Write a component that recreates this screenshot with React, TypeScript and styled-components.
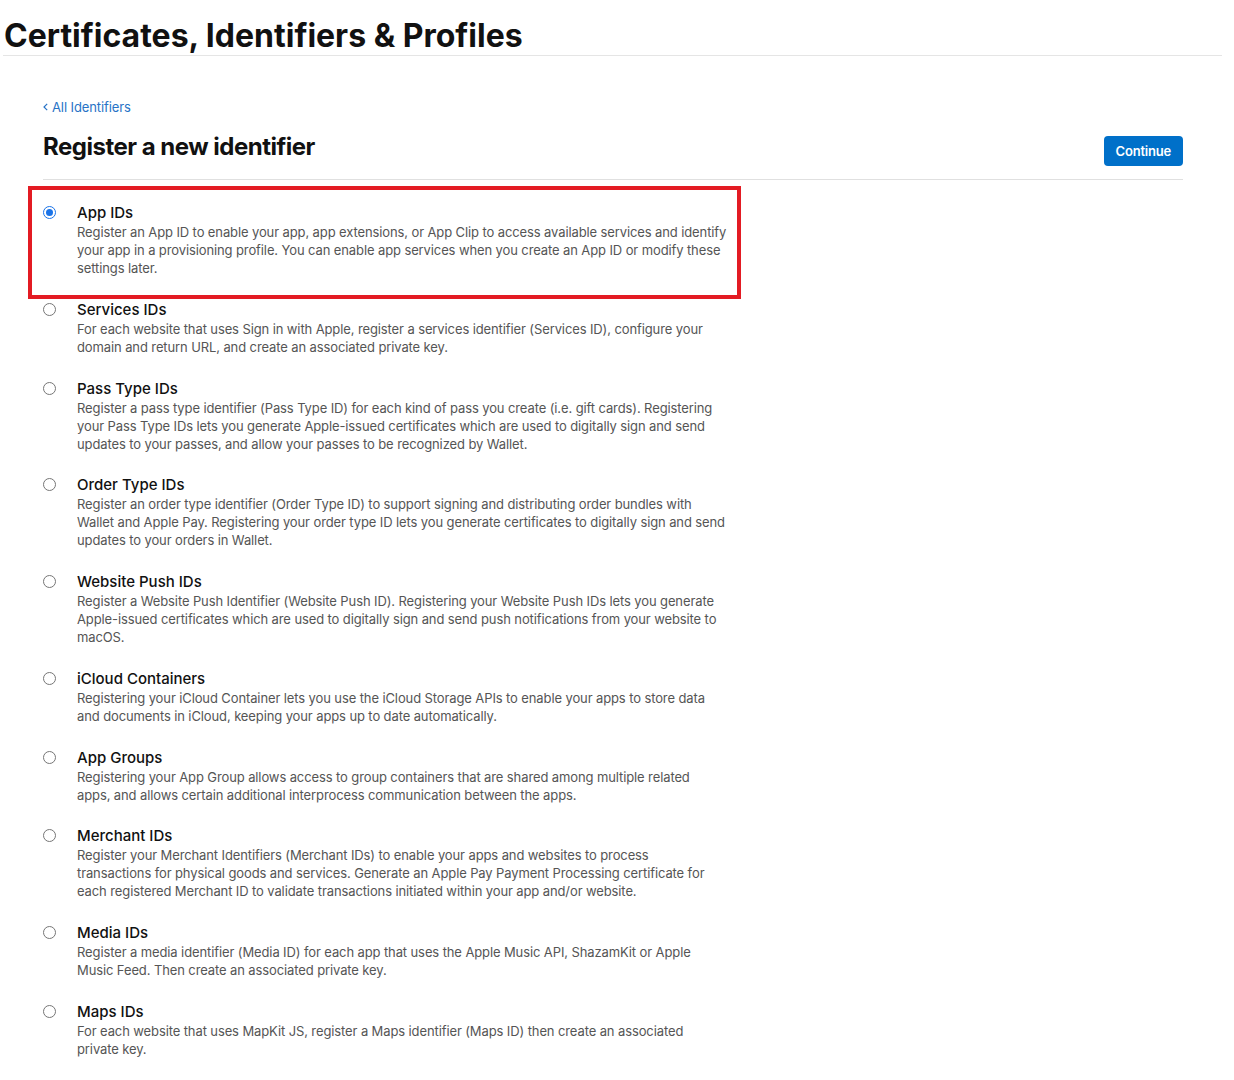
import React, { useState } from 'react';
import styled, { createGlobalStyle } from 'styled-components';

const GlobalStyles = createGlobalStyle`
  html, body {
    margin: 0;
    padding: 0;
    background: #fff;
  }
  body {
    font-family: Inter, "Noto Sans", "Liberation Sans", sans-serif;
    color: #1d1d1f;
    -webkit-font-smoothing: antialiased;
  }
`;

const Page = styled.div`
  width: 1234px;
  min-height: 1080px;
`;

const Header = styled.header`
  margin: 0 12px 0 3px;
  padding-top: 16px;
  border-bottom: 1px solid #e5e5e5;
`;

const PageTitle = styled.h1`
  margin: 0;
  padding-left: 1px;
  font-size: 32px;
  line-height: 39px;
  font-weight: 700;
  letter-spacing: 0;
  color: #111;
`;

const Main = styled.main`
  width: 1140px;
  margin-left: 43px;
  padding-top: 39px;
`;

const BackLink = styled.a`
  display: inline-flex;
  align-items: center;
  gap: 4px;
  font-size: 13px;
  line-height: 16px;
  letter-spacing: -0.1px;
  color: #2873c6;
  text-decoration: none;
`;

const TitleRow = styled.div`
  display: flex;
  align-items: flex-start;
  justify-content: space-between;
  padding: 8px 0 13px;
  border-bottom: 1px solid #e0e0e0;
`;

const SectionTitle = styled.h2`
  margin: 9px 0 0;
  font-size: 24px;
  line-height: 30px;
  font-weight: 700;
  color: #111;
  letter-spacing: -0.5px;
`;

const PrimaryButton = styled.button`
  margin-top: 13px;
  height: 30px;
  padding: 0 12px;
  border: none;
  border-radius: 4px;
  background: #0070c9;
  color: #fff;
  font-family: inherit;
  font-size: 13px;
  font-weight: 600;
  letter-spacing: -0.2px;
  cursor: pointer;
`;

const OptionList = styled.div`
  position: relative;
  display: flex;
  flex-direction: column;
  gap: 22.75px;
  padding-top: 23px;
`;

const Option = styled.label`
  display: grid;
  grid-template-columns: 34px 650px;
  cursor: pointer;
`;

const Radio = styled.span<{ $checked: boolean }>`
  box-sizing: border-box;
  width: 13px;
  height: 13px;
  margin-top: 3px;
  border-radius: 50%;
  border: 1px solid ${p => (p.$checked ? '#1a73e8' : '#767676')};
  background: #fff;
  position: relative;

  &::after {
    content: '';
    display: ${p => (p.$checked ? 'block' : 'none')};
    position: absolute;
    inset: 2px;
    border-radius: 50%;
    background: #1a73e8;
  }
`;

const OptionTitle = styled.div`
  font-size: 15px;
  line-height: 20px;
  font-weight: 500;
  color: #111;
`;

const OptionText = styled.div`
  font-size: 13px;
  line-height: 18px;
  letter-spacing: -0.11px;
  color: #555;
  white-space: pre-line;
`;

const Highlight = styled.div`
  position: absolute;
  left: -15px;
  top: 6px;
  width: 713px;
  height: 113px;
  box-sizing: border-box;
  border: 4px solid #e31b23;
  pointer-events: none;
`;

const options = [
  {
    title: 'App IDs',
    text: 'Register an App ID to enable your app, app extensions, or App Clip to access available services and identify your app in a provisioning profile. You can enable app services when you create an App ID or modify these settings later.',
  },
  {
    title: 'Services IDs',
    text: 'For each website that uses Sign in with Apple, register a services identifier (Services ID), configure your domain and return URL, and create an associated private key.',
  },
  {
    title: 'Pass Type IDs',
    text: 'Register a pass type identifier (Pass Type ID) for each kind of pass you create (i.e. gift cards). Registering your Pass Type IDs lets you generate Apple-issued certificates which are used to digitally sign and send updates to your passes, and allow your passes to be recognized by Wallet.',
  },
  {
    title: 'Order Type IDs',
    text: 'Register an order type identifier (Order Type ID) to support signing and distributing order bundles with Wallet and Apple Pay. Registering your order type ID lets you generate certificates to digitally sign and send updates to your orders in Wallet.',
  },
  {
    title: 'Website Push IDs',
    text: 'Register a Website Push Identifier (Website Push ID). Registering your Website Push IDs lets you generate Apple-issued certificates which are used to digitally sign and send push notifications from your website to macOS.',
  },
  {
    title: 'iCloud Containers',
    text: 'Registering your iCloud Container lets you use the iCloud Storage APIs to enable your apps to store data and documents in iCloud, keeping your apps up to date automatically.',
  },
  {
    title: 'App Groups',
    text: 'Registering your App Group allows access to group containers that are shared among multiple related\napps, and allows certain additional interprocess communication between the apps.',
  },
  {
    title: 'Merchant IDs',
    text: 'Register your Merchant Identifiers (Merchant IDs) to enable your apps and websites to process\ntransactions for physical goods and services. Generate an Apple Pay Payment Processing certificate for each registered Merchant ID to validate transactions initiated within your app and/or website.',
  },
  {
    title: 'Media IDs',
    text: 'Register a media identifier (Media ID) for each app that uses the Apple Music API, ShazamKit or Apple Music Feed. Then create an associated private key.',
  },
  {
    title: 'Maps IDs',
    text: 'For each website that uses MapKit JS, register a Maps identifier (Maps ID) then create an associated private key.',
  },
];

const Chevron = () => (
  <svg width="5" height="8" viewBox="0 0 5 8" fill="none">
    <path d="M4.2 0.8L1 4l3.2 3.2" stroke="#2873c6" strokeWidth="1.2" />
  </svg>
);

const App = () => {
  const [selected, setSelected] = useState(0);

  return (
    <Page>
      <GlobalStyles />
      <Header>
        <PageTitle>Certificates, Identifiers &amp; Profiles</PageTitle>
      </Header>
      <Main>
        <BackLink href="#">
          <Chevron />
          All Identifiers
        </BackLink>
        <TitleRow>
          <SectionTitle>Register a new identifier</SectionTitle>
          <PrimaryButton>Continue</PrimaryButton>
        </TitleRow>
        <OptionList>
          {options.map((o, i) => (
            <Option key={o.title} onClick={() => setSelected(i)}>
              <Radio $checked={selected === i} />
              <div>
                <OptionTitle>{o.title}</OptionTitle>
                <OptionText>{o.text}</OptionText>
              </div>
            </Option>
          ))}
          <Highlight />
        </OptionList>
      </Main>
    </Page>
  );
};

export default App;
